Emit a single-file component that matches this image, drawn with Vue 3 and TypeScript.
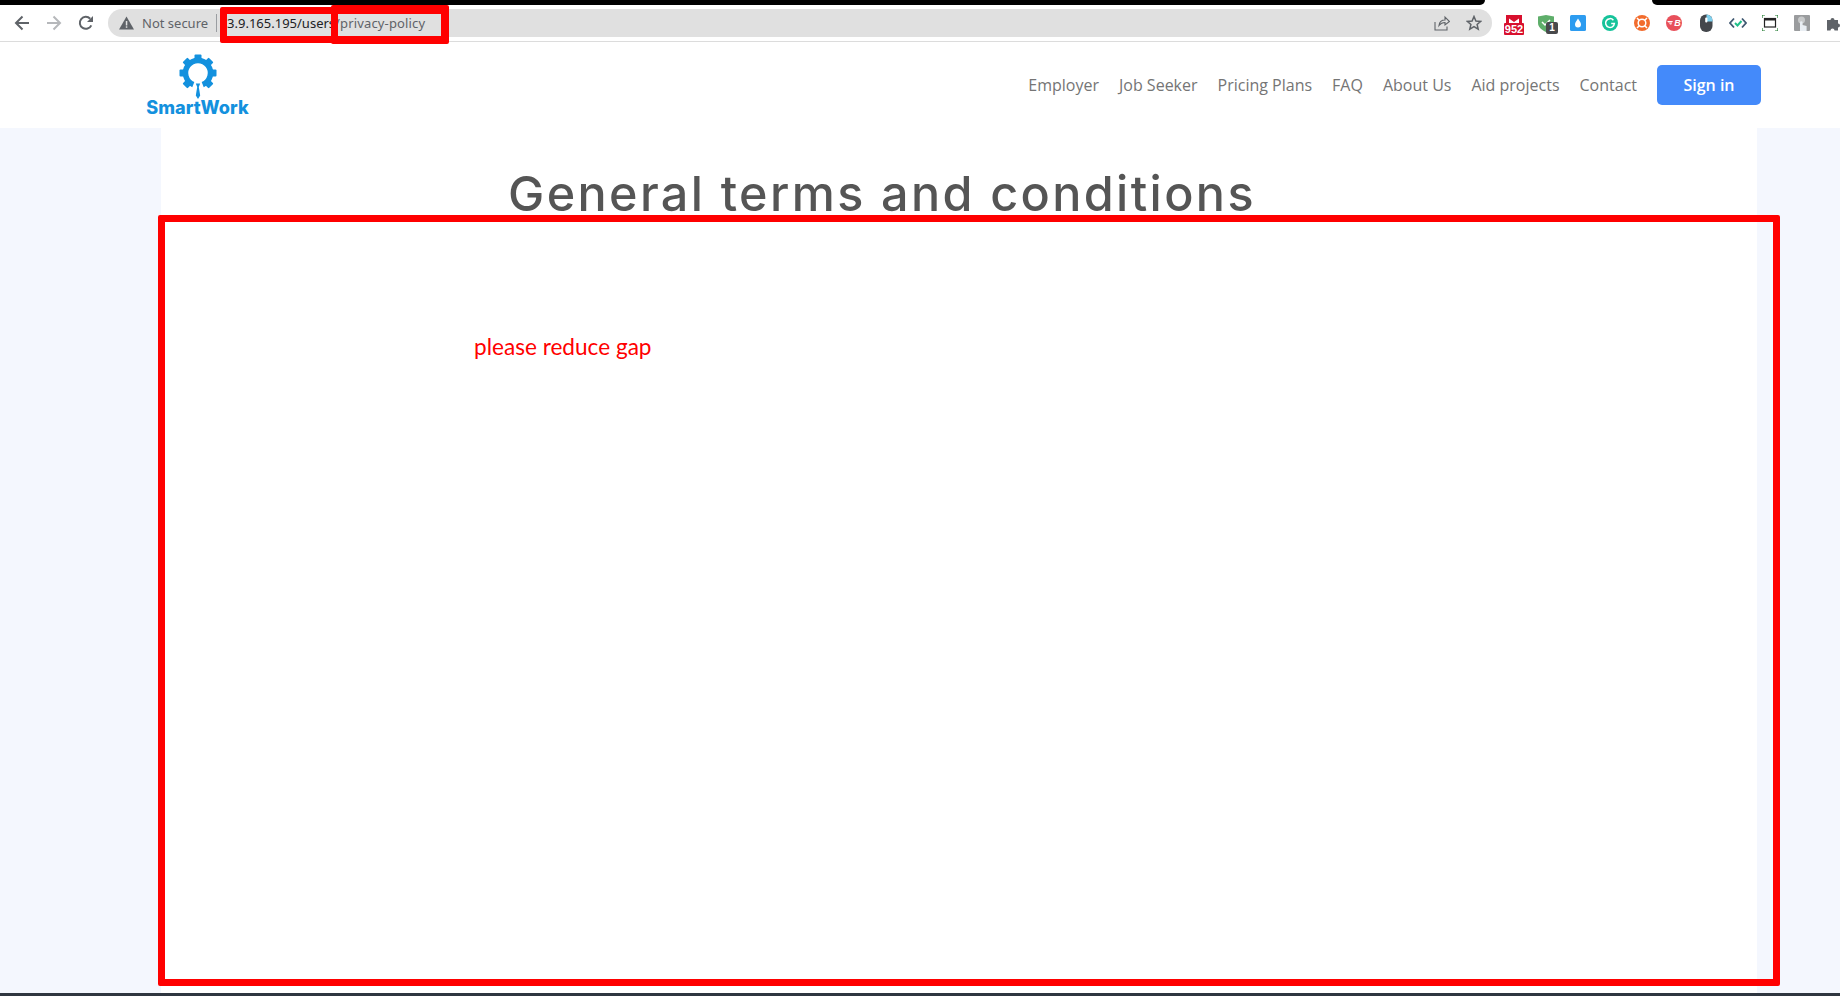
<template>
  <div class="page">
    <div class="top-strip">
      <span class="strip-left"></span>
      <span class="strip-gap"></span>
      <span class="strip-right"></span>
    </div>

    <div class="toolbar">
      <button class="tool">
        <svg width="16" height="16" viewBox="0 0 16 16"><path d="M15 8H2.500M8.500 1.500 2 8l6.500 6.500" class="line" /></svg>
      </button>
      <button class="tool">
        <svg width="16" height="16" viewBox="0 0 16 16"><path d="M1 8h12.500M7.500 1.500 14 8l-6.500 6.500" class="line light" /></svg>
      </button>
      <button class="tool">
        <svg width="16" height="16" viewBox="0 0 16 16">
          <path d="M13.300 10.300A6 6 0 1 1 12.200 3.700" class="line" />
          <path d="M15 1v6H9z" fill="#5f6368" />
        </svg>
      </button>

      <div class="omnibox">
        <svg class="warn" width="15" height="14" viewBox="0 0 15 14">
          <path d="M7.500 0.500 15 13.500H0z" fill="#5f6368" />
          <rect x="6.800" y="5" width="1.500" height="4.500" fill="#e0e0e0" />
          <rect x="6.800" y="10.300" width="1.500" height="1.500" fill="#e0e0e0" />
        </svg>
        <span class="not-secure">Not secure</span>
        <span class="divider"></span>
        <span class="url"><b>3.9.165.195/users</b><span class="url-path">/privacy-policy</span></span>
        <span class="spacer"></span>
        <svg class="pill-icon share" width="16" height="16" viewBox="0 0 16 16">
          <path d="M1 7v8h12v-3.500M5 10.500C5.500 6.500 8 5 11 5V2l4.500 4.500L11 10V7.500c-2.500 0-4.500 1-6 3z" fill="none" stroke="#5f6368" stroke-width="1.100" />
        </svg>
        <svg class="pill-icon" width="16" height="16" viewBox="0 0 16 16">
          <path d="M8 1.500 9.900 6l4.800.4-3.600 3.100 1.100 4.700L8 11.700l-4.200 2.500 1.100-4.700L1.300 6.400 6.100 6z" fill="none" stroke="#5f6368" stroke-width="1.500" />
        </svg>
      </div>

      <div class="ext">
        <div class="gmail">
          <svg width="16" height="8" viewBox="0 0 16 8"><path d="M0 0h16v8h-3V3.500L8 7 3 3.500V8H0z" fill="#d8102e" /></svg>
          <span class="gmail-count">952</span>
        </div>
      </div>
      <div class="ext">
        <svg width="16" height="17" viewBox="0 0 16 17">
          <path d="M0 1.500 8 0l8 1.500V8c0 4-3.500 7-8 9-4.500-2-8-5-8-9z" fill="#5eae6a" />
          <path d="M4 7l3 3 5-5" fill="none" stroke="#fff" stroke-width="1.500" />
        </svg>
        <span class="shield-badge">1</span>
      </div>
      <div class="ext">
        <svg width="16" height="16" viewBox="0 0 16 16">
          <rect width="16" height="16" rx="1.500" fill="#2d9cf0" />
          <path d="M8 3.500C9.500 6 11 7.500 11 9.500a3 3 0 0 1-6 0C5 7.500 6.500 6 8 3.500z" fill="#fff" />
        </svg>
      </div>
      <div class="ext">
        <svg width="16" height="16" viewBox="0 0 16 16">
          <circle cx="8" cy="8" r="8" fill="#15c39a" />
          <path d="M11.400 5.200A4.400 4.400 0 1 0 12.400 8.500H9.200" fill="none" stroke="#fff" stroke-width="1.500" />
        </svg>
      </div>
      <div class="ext">
        <svg width="16" height="16" viewBox="0 0 16 16">
          <circle cx="8" cy="8" r="8" fill="#f26c2d" />
          <circle cx="8" cy="8" r="3.800" fill="none" stroke="#fff" stroke-width="1.500" />
          <path d="M3 3l2.500 2.500M13 3l-2.500 2.500M3 13l2.500-2.500M13 13l-2.500-2.500" stroke="#fff" stroke-width="1.500" />
        </svg>
      </div>
      <div class="ext">
        <div class="red-ext">
          <svg width="6" height="6" viewBox="0 0 6 6"><path d="M0 1h6L5 2.500H1.500zM2 3.200h3L4.300 4.500H3z" fill="#fff" /></svg>
          <span>B</span>
        </div>
      </div>
      <div class="ext">
        <svg width="13" height="18" viewBox="0 0 13 18">
          <rect y="0.500" width="12.500" height="17.500" rx="6" fill="#44474c" />
          <path d="M6.500 0.500a6 6 0 0 1 6 6v1h-6z" fill="#7fd0ee" />
          <rect x="5.200" y="3.500" width="2.200" height="5" rx="1" fill="#fff" />
        </svg>
      </div>
      <div class="ext">
        <svg width="18" height="12" viewBox="0 0 18 12">
          <path d="M5 1.500 1 6l4 4.500M13 1.500 17 6l-4 4.500" fill="none" stroke="#3f5871" stroke-width="1.800" />
          <path d="M6 6l2.500 2.500L12.500 4" fill="none" stroke="#20c08a" stroke-width="2" />
        </svg>
      </div>
      <div class="ext">
        <svg width="16" height="16" viewBox="0 0 16 16">
          <path d="M0 3V0h3M13 0h3v3M16 13v3h-3M3 16H0v-3" fill="none" stroke="#1f7a2e" stroke-width="1.200" />
          <rect x="2.500" y="3.500" width="11" height="8.500" fill="#fff" stroke="#222" stroke-width="1.200" />
          <rect x="2.500" y="3.500" width="11" height="2" fill="#222" />
        </svg>
      </div>
      <div class="ext">
        <svg width="16" height="16" viewBox="0 0 16 16">
          <rect width="16" height="16" rx="1" fill="#9a9c9e" />
          <circle cx="7.500" cy="5" r="3.500" fill="#c7c9ca" />
          <path d="M6 16V7.500a1.300 1.300 0 0 1 2.600 0V10l4 1v5z" fill="#e9eef3" />
        </svg>
      </div>
      <div class="ext">
        <svg width="16" height="16" viewBox="0 0 16 16">
          <path d="M1 5h3.500a2 2 0 1 1 4 0H12v3.500a2 2 0 1 1 0 4V15.500H8.500a2 2 0 1 0-4 0H1z" fill="#5f6368" />
        </svg>
      </div>
    </div>

    <header class="site-header">
      <div class="logo">
        <svg class="gear" width="40" height="46" viewBox="0 0 40 46">
          <path d="M15.300 30.600A12.500 12.500 0 1 1 24.700 30.600" fill="none" stroke="#1391de" stroke-width="5.500" />
          <rect
            v-for="angle in teeth"
            :key="angle"
            x="16.500"
            y="0.500"
            width="7"
            height="6"
            rx="1"
            fill="#1391de"
            :transform="`rotate(${angle} 20 19)`"
          />
          <path d="M17.800 29.500h4.400l-1.400 3.500 1.400 8.500L20 45l-2.200-3.500 1.400-8.500z" fill="#1391de" />
        </svg>
        <span class="logo-name">SmartWork</span>
      </div>
      <nav class="site-nav">
        <a v-for="item in navItems" :key="item">{{ item }}</a>
        <button class="sign-in">Sign in</button>
      </nav>
    </header>

    <main class="content">
      <section class="sheet">
        <h1>General terms and conditions</h1>
      </section>
    </main>

    <div class="bottom-bar"></div>

    <!-- red markup drawn on top of the screenshot -->
    <div class="mark mark-host"></div>
    <div class="mark mark-path"></div>
    <div class="mark mark-page"></div>
    <p class="mark-note">please reduce gap</p>
  </div>
</template>

<script setup lang="ts">
const navItems: string[] = [
  "Employer",
  "Job Seeker",
  "Pricing Plans",
  "FAQ",
  "About Us",
  "Aid projects",
  "Contact",
];

const teeth: number[] = [0, 45, 90, 135, 225, 270, 315];
</script>

<style>
html,
body {
  margin: 0;
  background: #fff;
}
</style>

<style scoped>
.page {
  position: relative;
  width: 1840px;
  height: 996px;
  overflow: hidden;
  display: flex;
  flex-direction: column;
  background: #f4f7fe;
  font-family: "Open Sans", sans-serif;
}

.top-strip {
  display: flex;
  height: 5px;
  background: #fff;
}

.strip-left {
  width: 1485px;
  background: #000;
  border-bottom-right-radius: 5px;
}

.strip-gap {
  width: 167px;
}

.strip-right {
  flex: 1;
  background: #000;
  border-bottom-left-radius: 5px;
}

.toolbar {
  display: flex;
  align-items: center;
  height: 36px;
  padding-left: 6px;
  background: #fff;
  border-bottom: 1px solid #dcdcdc;
}

.tool,
.ext {
  position: relative;
  flex: none;
  display: flex;
  align-items: center;
  justify-content: center;
  width: 32px;
  height: 32px;
  padding: 0;
  border: none;
  background: none;
}

.line {
  fill: none;
  stroke: #5f6368;
  stroke-width: 2;
}

.line.light {
  stroke: #b6b8bb;
}

.omnibox {
  flex: none;
  display: flex;
  align-items: center;
  width: 1384px;
  height: 28px;
  margin: 0 6px;
  padding: 0 10px 0 11px;
  box-sizing: border-box;
  border-radius: 14px;
  background: #e0e0e0;
  font-family: "Noto Sans", sans-serif;
  font-size: 13px;
  color: #5f6368;
}

.warn {
  margin-right: 8px;
}

.divider {
  width: 1px;
  height: 18px;
  margin: 0 10px 0 8px;
  background: #9a9da1;
}

.url b {
  font-weight: 400;
  color: #202124;
}

.url-path {
  letter-spacing: 0.15px;
}

.spacer {
  flex: 1;
}

.pill-icon {
  margin-left: 16px;
}

.gmail {
  display: flex;
  flex-direction: column;
  align-items: center;
  margin-top: 3px;
}

.gmail-count {
  width: 20px;
  height: 12px;
  border-radius: 1px;
  background: #d8102e;
  color: #fff;
  font-family: "Liberation Sans", sans-serif;
  font-size: 11px;
  font-weight: 700;
  line-height: 12px;
  text-align: center;
}

.shield-badge {
  position: absolute;
  left: 16px;
  top: 15px;
  width: 12px;
  height: 12px;
  border-radius: 2px;
  background: #48494b;
  color: #fff;
  font-family: "Liberation Sans", sans-serif;
  font-size: 10px;
  font-weight: 700;
  line-height: 12px;
  text-align: center;
}

.red-ext {
  display: flex;
  align-items: center;
  justify-content: center;
  gap: 1px;
  width: 16px;
  height: 16px;
  border-radius: 50%;
  background: #e8505b;
  color: #fff;
  font-family: "Liberation Sans", sans-serif;
  font-size: 9px;
  font-weight: 700;
  font-style: italic;
  line-height: 1;
}

.site-header {
  flex: none;
  display: flex;
  align-items: center;
  justify-content: space-between;
  height: 86px;
  padding: 0 79px 0 147px;
  background: #fff;
}

.logo {
  display: flex;
  flex-direction: column;
  align-items: center;
  width: 101px;
}

.gear {
  margin-bottom: -3px;
}

.logo-name {
  font-family: Inter, sans-serif;
  font-size: 18.100px;
  font-weight: 800;
  line-height: 20px;
  color: #1391de;
  white-space: nowrap;
}

.site-nav {
  display: flex;
  align-items: center;
  gap: 20px;
  font-size: 16px;
  color: #757575;
}

.sign-in {
  width: 104px;
  height: 40px;
  border: none;
  border-radius: 5px;
  background: #448afa;
  color: #fff;
  font-family: "Open Sans", sans-serif;
  font-size: 16px;
  font-weight: 600;
}

.content {
  flex: 1;
  display: flex;
  padding-left: 161px;
}

.sheet {
  width: 1596px;
  padding-left: 347px;
  box-sizing: border-box;
  background: #fff;
}

h1 {
  margin: 36px 0 0;
  font-family: Inter, sans-serif;
  font-size: 48.500px;
  font-weight: 500;
  line-height: 60px;
  letter-spacing: 2.380px;
  color: #555;
  white-space: nowrap;
}

.bottom-bar {
  flex: none;
  height: 3px;
  background: #2f3640;
}

.mark {
  position: absolute;
  box-sizing: border-box;
  border: 7px solid #f00;
  border-radius: 2px;
}

.mark-host {
  left: 220px;
  top: 7px;
  width: 118px;
  height: 36px;
}

.mark-path {
  left: 331px;
  top: 5px;
  width: 118px;
  height: 39px;
  border-width: 9px 8px 8px 6px;
}

.mark-page {
  left: 158px;
  top: 215px;
  width: 1622px;
  height: 771px;
}

.mark-note {
  position: absolute;
  left: 474px;
  top: 333px;
  margin: 0;
  font-family: Lato, sans-serif;
  font-size: 22.600px;
  line-height: 28px;
  color: #f00;
}
</style>
